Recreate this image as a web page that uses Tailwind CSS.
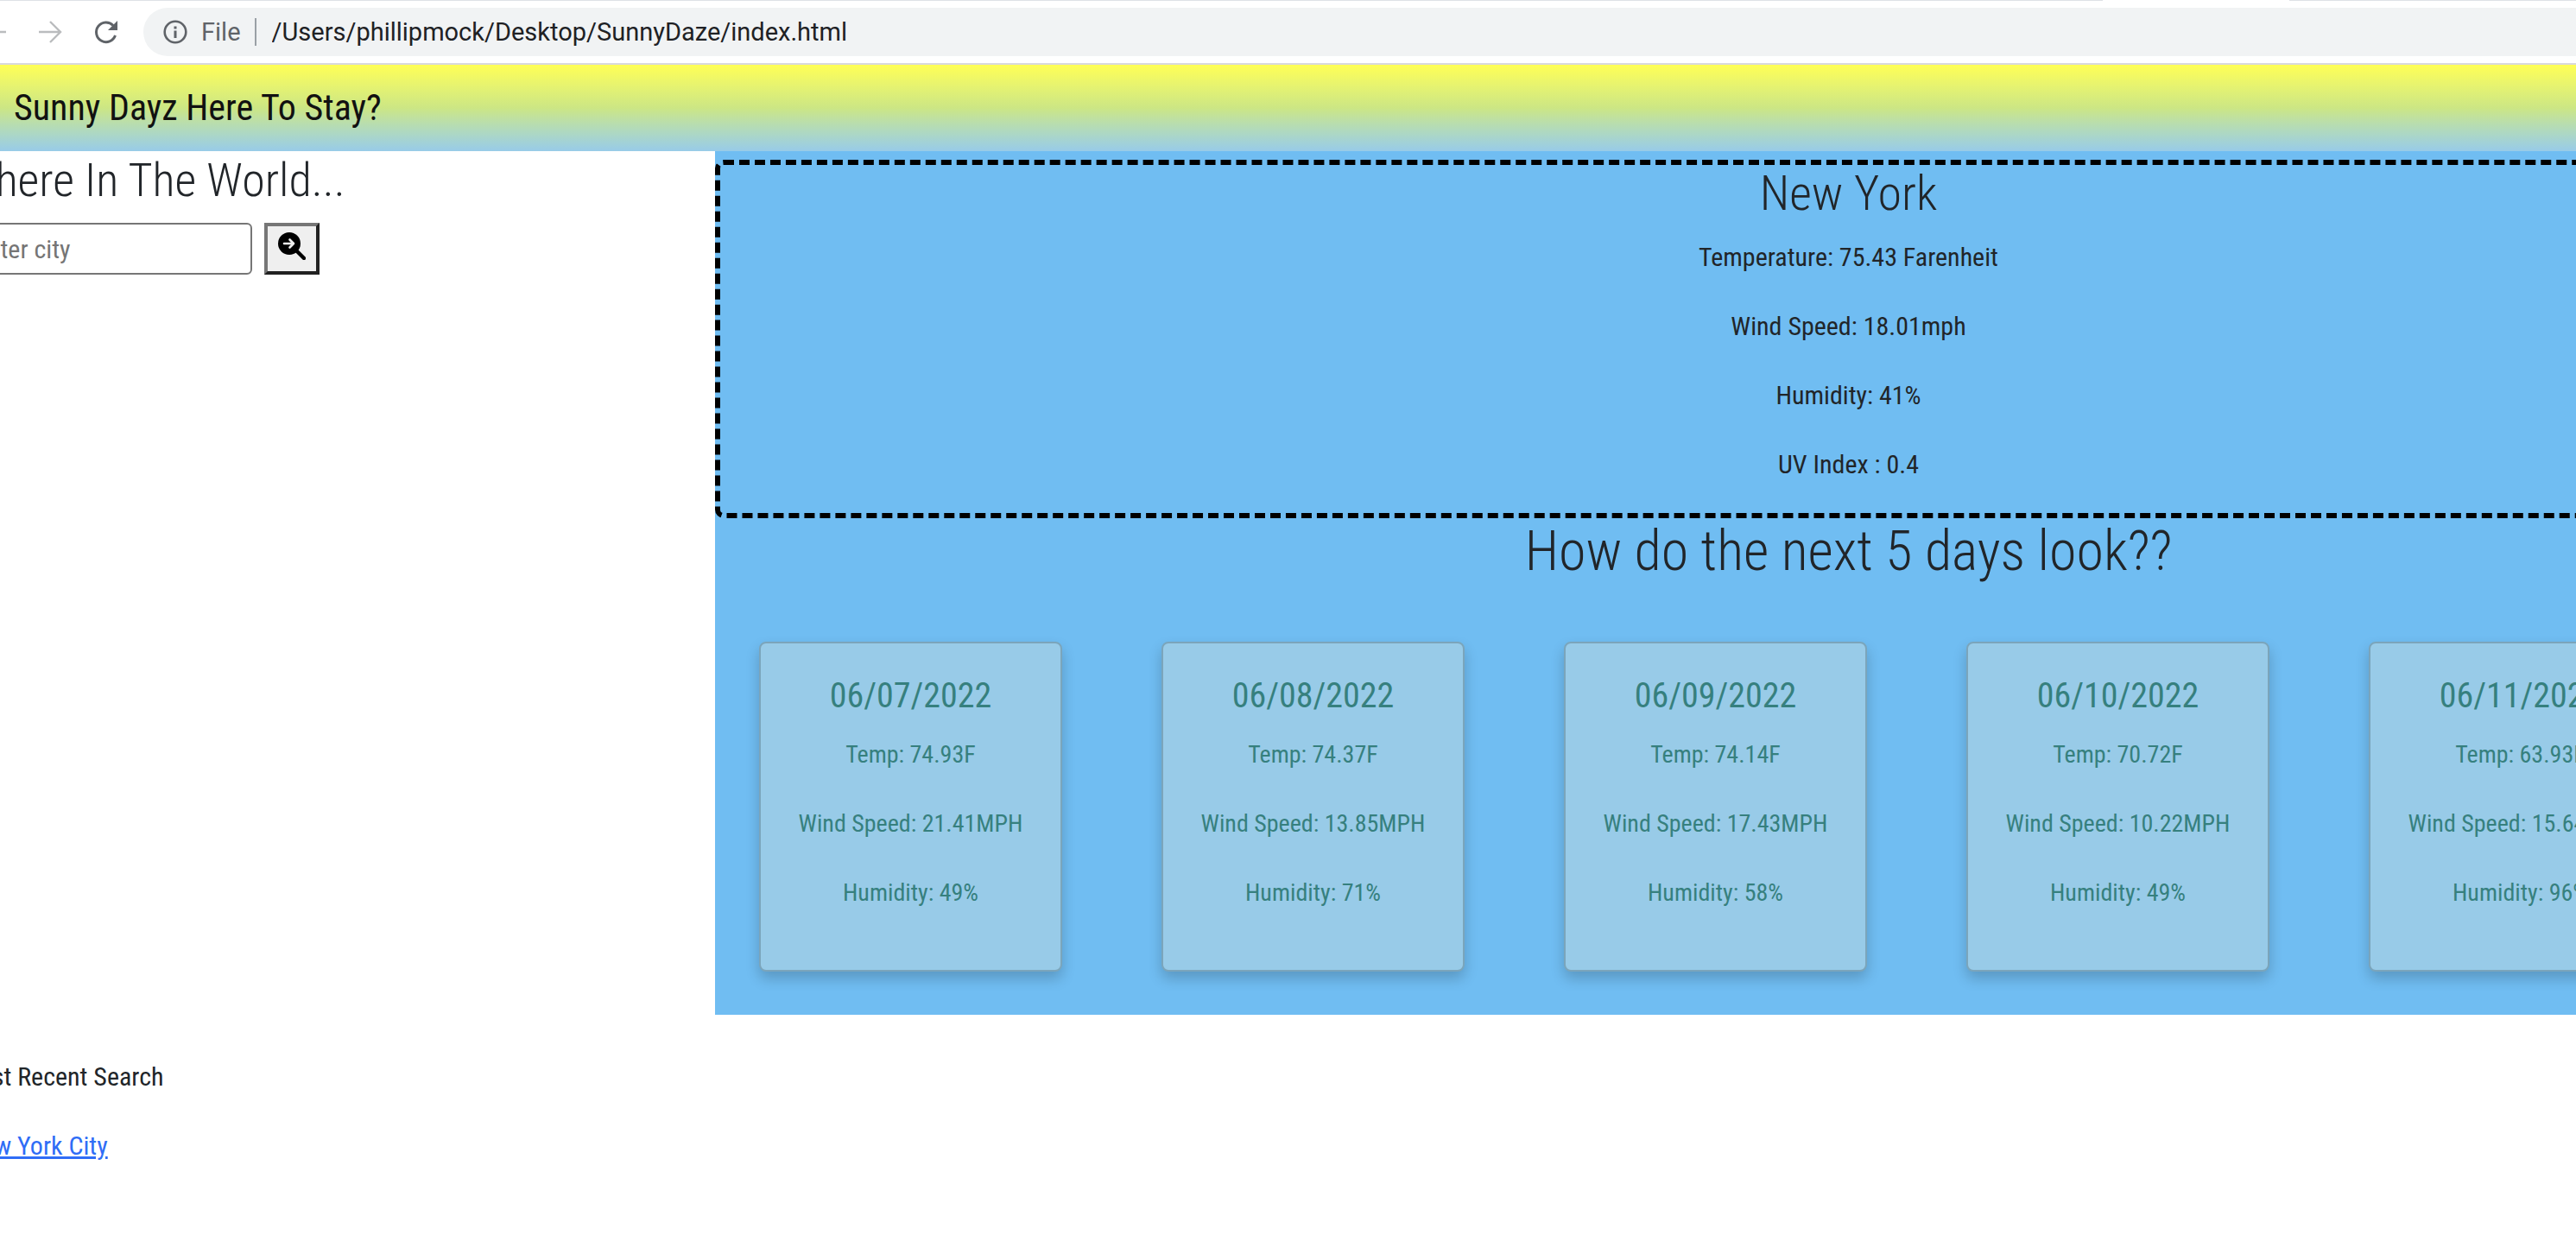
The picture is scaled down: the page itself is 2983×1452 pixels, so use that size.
<!DOCTYPE html>
<html lang="en">
<head>
<meta charset="utf-8">
<title>Sunny Dayz</title>
<script src="https://cdn.jsdelivr.net/npm/@tailwindcss/browser@4"></script>
</head>
<body class="min-h-screen overflow-x-hidden bg-white font-['Roboto_Condensed','Open_Sans',sans-serif] text-[30px] leading-[48px] text-[#212529]">

<!-- Browser toolbar -->
<div class="relative flex h-[75px] items-center overflow-hidden border-b-2 border-[#d9d9dc] bg-white font-['Roboto',sans-serif] text-[29px]">
  <div class="absolute inset-x-0 top-0 flex h-px"><span class="w-[2435px] shrink-0 bg-[#dee1e6]"></span><span class="w-[216px] shrink-0"></span><span class="flex-1 bg-[#dee1e6]"></span></div>
  <button aria-label="Back" class="-ml-5 h-[28px] w-[28px] shrink-0 text-[#babcbe]">
    <svg viewBox="0 0 28 28" class="h-full w-full" fill="none" stroke="currentColor" stroke-width="2.4"><path d="M27 14H3M14 2L2 14l12 12"/></svg>
  </button>
  <button aria-label="Forward" class="ml-[36px] h-[28px] w-[28px] shrink-0 text-[#babcbe]">
    <svg viewBox="0 0 28 28" class="h-full w-full" fill="none" stroke="currentColor" stroke-width="2.4"><path d="M1 14H26M14 2L26 14L14 26"/></svg>
  </button>
  <button aria-label="Reload" class="ml-[36px] h-[30px] w-[30px] shrink-0 text-[#5f6368]">
    <svg viewBox="0 0 30 30" class="h-full w-full" fill="none" stroke="currentColor" stroke-width="3"><path d="M23 7.5A11.3 11.3 0 1 0 25.5 19"/><path d="M28 2V13H17z" fill="currentColor" stroke="none"/></svg>
  </button>
  <div class="ml-[28px] flex h-[56px] flex-1 items-center rounded-l-full bg-[#f1f3f4] pl-[23px]">
    <svg viewBox="0 0 28 28" class="h-[28px] w-[28px]" fill="none" stroke="#5f6368" stroke-width="2.6"><circle cx="14" cy="14" r="12.3"/><path d="M14 12.5V21M14 7.5V10.5" stroke-width="3"/></svg>
    <span class="ml-4 text-[#5f6368]">File</span>
    <span class="ml-4 h-[32px] w-[2px] bg-[#9aa0a6]"></span>
    <input aria-label="Address" class="ml-[18px] min-w-0 flex-1 bg-transparent text-[#202124] outline-none" value="/Users/phillipmock/Desktop/SunnyDaze/index.html">
  </div>
</div>

<div class="-ml-[47px] w-[calc(100%+517px)]">
  <header class="flex h-[100px] items-center bg-linear-to-b from-[#ffff54] via-[#cce684] to-[#98cbe8] pl-[63px] text-[42px] text-[#111]">
    <h1>Sunny Dayz Here To Stay?</h1>
  </header>

  <div class="flex">
    <aside class="w-1/4">
      <h2 class="mb-4 text-[54px] leading-[67px] font-light">Where In The World...</h2>
      <form class="flex gap-[14px]">
        <input aria-label="City" placeholder="Enter city" class="h-[60px] w-[339px] rounded-md border-2 border-[#767676] bg-white px-4 placeholder:text-[#757575]">
        <button type="button" aria-label="Search" class="flex h-[60px] w-[64px] items-start justify-center border-4 border-t-[#767676] border-r-[#212121] border-b-[#212121] border-l-[#767676] bg-[#efefef] pt-[7px]">
          <svg viewBox="0 0 32 32" class="h-[32px] w-[32px]"><circle cx="13" cy="13" r="13"/><path d="M19 19L30 30" stroke="#000" stroke-width="4.4" stroke-linecap="round"/><path d="M7 13H18M13.5 8.5L18 13l-4.500 4.500" fill="none" stroke="#efefef" stroke-width="2.600" stroke-linecap="round" stroke-linejoin="round"/></svg>
        </button>
      </form>
    </aside>

    <main class="w-3/4 bg-[#70bdf2] pt-[10px] pb-[50px] text-center">
      <section class="rounded-[10px] border-6 border-dashed border-black">
        <h2 class="mb-4 text-[56px] leading-[67px] font-light">New York</h2>
        <p class="mb-8">Temperature: 75.43 Farenheit</p>
        <p class="mb-8">Wind Speed: 18.01mph</p>
        <p class="mb-8">Humidity: 41%</p>
        <p class="mb-8">UV Index : 0.4</p>
      </section>
      <h2 class="text-[64px] leading-[77px] font-light">How do the next 5 days look??</h2>

      <div class="flex gap-[115px] pt-[66px] pl-[51px] text-[28px] text-[#36807e]">
        <article class="h-[382px] w-[351px] shrink-0 rounded-lg border-2 border-[#7ba5bb] bg-[#98cbe8] pt-[37px] shadow-[0_8px_16px_rgba(0,0,0,0.2)]">
          <h3 class="mb-5 text-[40px]">06/07/2022</h3>
          <p class="mb-8">Temp: 74.93F</p>
          <p class="mb-8">Wind Speed: 21.41MPH</p>
          <p>Humidity: 49%</p>
        </article>
        <article class="h-[382px] w-[351px] shrink-0 rounded-lg border-2 border-[#7ba5bb] bg-[#98cbe8] pt-[37px] shadow-[0_8px_16px_rgba(0,0,0,0.2)]">
          <h3 class="mb-5 text-[40px]">06/08/2022</h3>
          <p class="mb-8">Temp: 74.37F</p>
          <p class="mb-8">Wind Speed: 13.85MPH</p>
          <p>Humidity: 71%</p>
        </article>
        <article class="h-[382px] w-[351px] shrink-0 rounded-lg border-2 border-[#7ba5bb] bg-[#98cbe8] pt-[37px] shadow-[0_8px_16px_rgba(0,0,0,0.2)]">
          <h3 class="mb-5 text-[40px]">06/09/2022</h3>
          <p class="mb-8">Temp: 74.14F</p>
          <p class="mb-8">Wind Speed: 17.43MPH</p>
          <p>Humidity: 58%</p>
        </article>
        <article class="h-[382px] w-[351px] shrink-0 rounded-lg border-2 border-[#7ba5bb] bg-[#98cbe8] pt-[37px] shadow-[0_8px_16px_rgba(0,0,0,0.2)]">
          <h3 class="mb-5 text-[40px]">06/10/2022</h3>
          <p class="mb-8">Temp: 70.72F</p>
          <p class="mb-8">Wind Speed: 10.22MPH</p>
          <p>Humidity: 49%</p>
        </article>
        <article class="h-[382px] w-[351px] shrink-0 rounded-lg border-2 border-[#7ba5bb] bg-[#98cbe8] pt-[37px] shadow-[0_8px_16px_rgba(0,0,0,0.2)]">
          <h3 class="mb-5 text-[40px]">06/11/2022</h3>
          <p class="mb-8">Temp: 63.93F</p>
          <p class="mb-8">Wind Speed: 15.64MPH</p>
          <p>Humidity: 96%</p>
        </article>
      </div>
    </main>
  </div>

  <section class="pt-12">
    <p class="mb-8">Most Recent Search</p>
    <a href="#" class="ml-2 text-[#2f6df6] underline decoration-[3px]">New York City</a>
  </section>
</div>
</body>
</html>
